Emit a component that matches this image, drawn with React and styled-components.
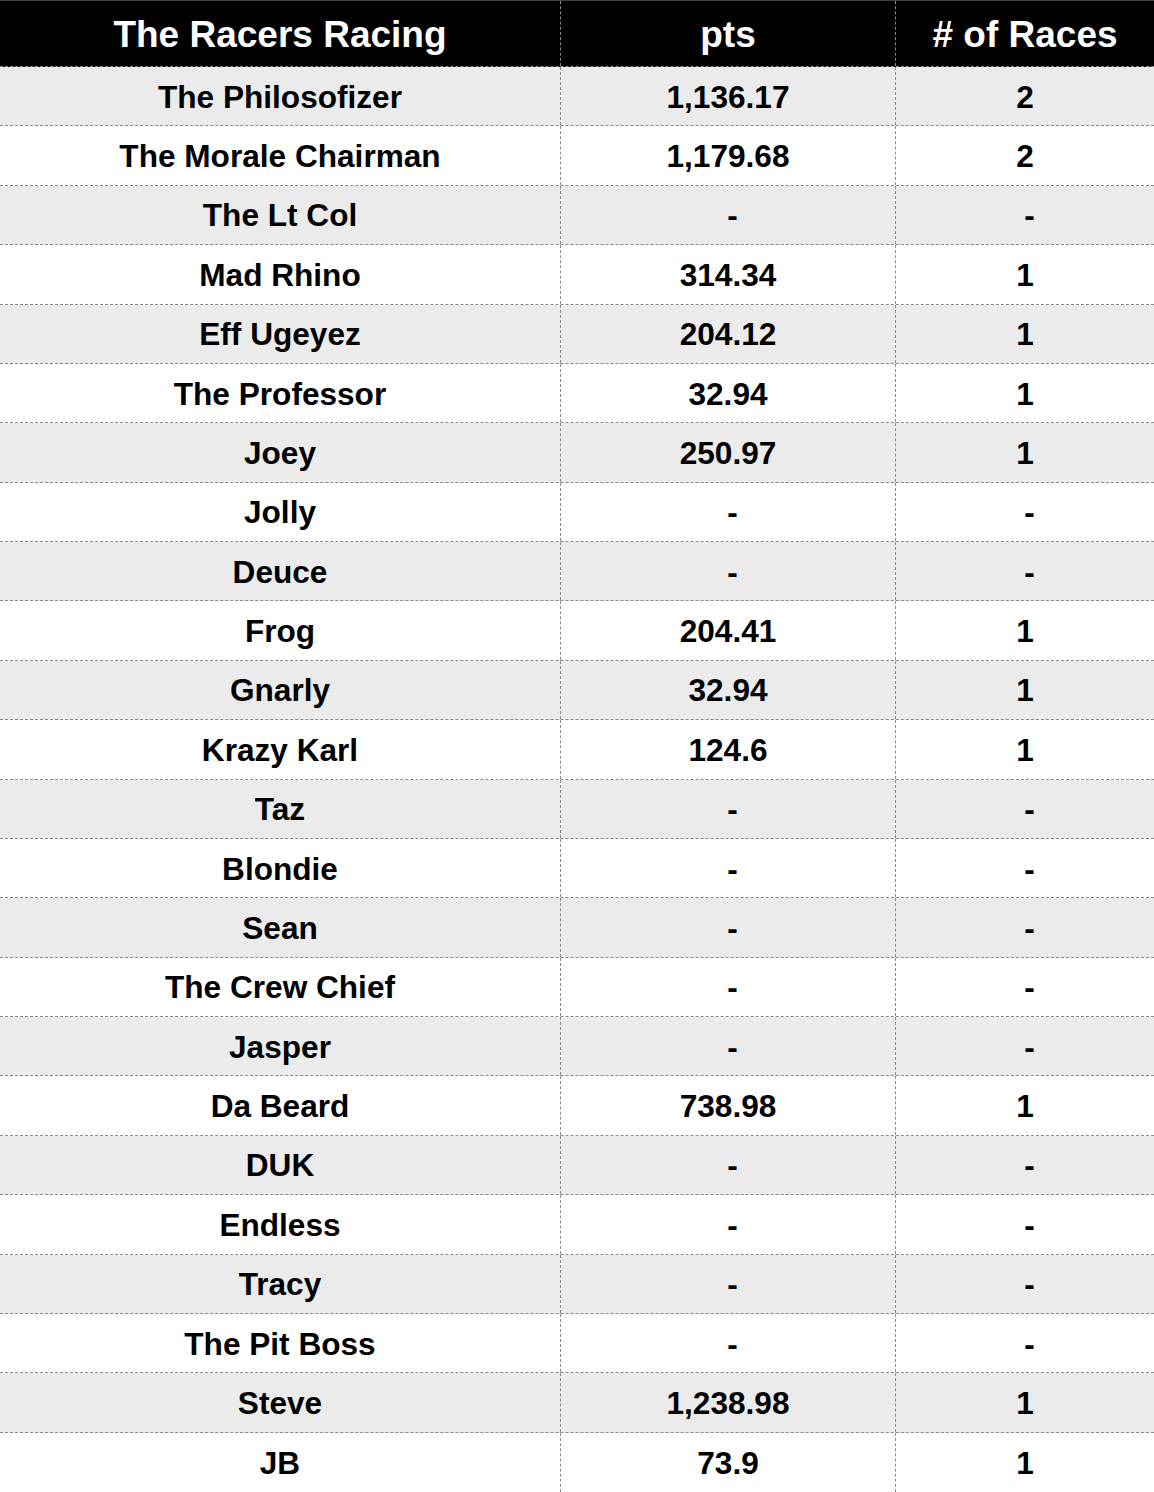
import React from "react";
import styled, { createGlobalStyle } from "styled-components";

const Global = createGlobalStyle`
  html, body { margin: 0; padding: 0; background: #ffffff; }
  body { font-family: "Liberation Sans", Arial, Helvetica, sans-serif; }
`;

const Table = styled.div`
  width: 1154px;
  display: flex;
  flex-direction: column;
  border-top: 1px solid #444444;
  border-bottom: 1px solid #cccccc;
`;

const Row = styled.div`
  display: grid;
  grid-template-columns: 561px 335px 1fr;
  box-sizing: border-box;
  height: ${(p) => (p.$header ? "66px" : "59.375px")};
  background: ${(p) => (p.$header ? "#000000" : p.$shade ? "#ebebeb" : "#ffffff")};
  color: ${(p) => (p.$header ? "#ffffff" : "#000000")};
  border-bottom: ${(p) => (p.$last ? "none" : "1px dashed #8a8a8a")};
  font-weight: bold;
  font-size: ${(p) => (p.$header ? "37px" : "31.6px")};
`;

const Cell = styled.div`
  display: flex;
  align-items: center;
  justify-content: center;
  white-space: nowrap;
  border-right: ${(p) => (p.$lastCol ? "none" : "1px dashed #8a8a8a")};
  padding-top: 2px;
  padding-left: ${(p) => (p.$dash ? "9px" : "0")};
  box-sizing: border-box;
`;

const rows = [
  ["The Philosofizer", "1,136.17", "2"],
  ["The Morale Chairman", "1,179.68", "2"],
  ["The Lt Col", "-", "-"],
  ["Mad Rhino", "314.34", "1"],
  ["Eff Ugeyez", "204.12", "1"],
  ["The Professor", "32.94", "1"],
  ["Joey", "250.97", "1"],
  ["Jolly", "-", "-"],
  ["Deuce", "-", "-"],
  ["Frog", "204.41", "1"],
  ["Gnarly", "32.94", "1"],
  ["Krazy Karl", "124.6", "1"],
  ["Taz", "-", "-"],
  ["Blondie", "-", "-"],
  ["Sean", "-", "-"],
  ["The Crew Chief", "-", "-"],
  ["Jasper", "-", "-"],
  ["Da Beard", "738.98", "1"],
  ["DUK", "-", "-"],
  ["Endless", "-", "-"],
  ["Tracy", "-", "-"],
  ["The Pit Boss", "-", "-"],
  ["Steve", "1,238.98", "1"],
  ["JB", "73.9", "1"],
];

export default function App() {
  return (
    <>
      <Global />
      <Table>
        <Row $header>
          <Cell $header>The Racers Racing</Cell>
          <Cell $header>pts</Cell>
          <Cell $header $lastCol># of Races</Cell>
        </Row>
        {rows.map((r, i) => (
          <Row key={i} $shade={i % 2 === 0} $last={i === rows.length - 1}>
            <Cell>{r[0]}</Cell>
            <Cell $dash={r[1] === "-"}>{r[1]}</Cell>
            <Cell $lastCol $dash={r[2] === "-"}>{r[2]}</Cell>
          </Row>
        ))}
      </Table>
    </>
  );
}
